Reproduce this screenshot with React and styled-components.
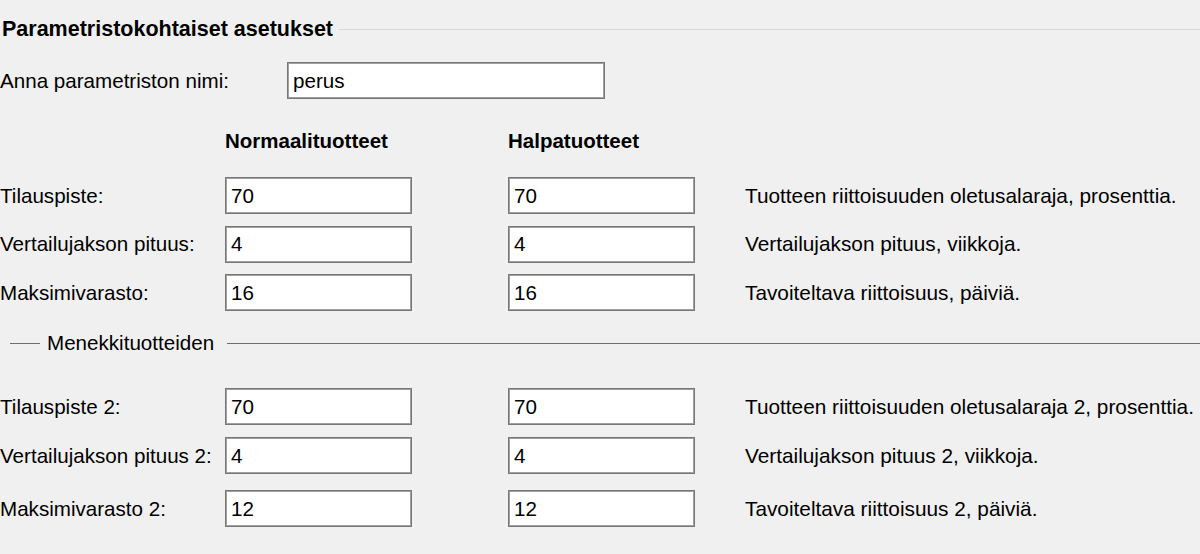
import React from 'react';
import styled, { createGlobalStyle } from 'styled-components';

//#region style

const GlobalStyle = createGlobalStyle`
    body {
        margin: 0;
        background: #f0f0f0;
        font-family: "Liberation Sans", Arial, sans-serif;
        color: #000;
    }
`;

const Page = styled.div`
    width: 1200px;
    height: 554px;
    padding-top: 17px;
    box-sizing: border-box;
    overflow: hidden;
`;

const GroupTitle = styled.div`
    display: flex;
    align-items: center;
    gap: 6px;
    height: 24px;
    padding-left: 2px;
`;

const TitleText = styled.span`
    font-size: 21.5px;
    font-weight: bold;
    white-space: nowrap;
`;

const TitleRule = styled.div`
    flex: 1;
    height: 1px;
    background: #d9d9d9;
`;

const NameRow = styled.div`
    display: flex;
    align-items: center;
    margin-top: 21px;
    height: 37px;
`;

const NameLabel = styled.span`
    font-size: 20.6px;
    width: 287px;
`;

const Row = styled.div`
    display: grid;
    grid-template-columns: 225px 283px 237px 1fr;
    align-items: center;
    height: ${p => p.$h || 37}px;
    margin-top: ${p => p.$top || 0}px;
`;

const Label = styled.span`
    font-size: 20.6px;
    white-space: nowrap;
`;

const Header = styled.span`
    font-size: 20.5px;
    font-weight: bold;
`;

const Help = styled.span`
    font-size: 20.8px;
    white-space: nowrap;
`;

const TextBox = styled.input`
    width: ${p => p.$w || 187}px;
    height: 37px;
    box-sizing: border-box;
    border: 1px solid #777;
    box-shadow: inset 0 0 0 1px #a0a0a0;
    background: #fff;
    padding: 0 0 0 5px;
    margin: 0;
    font-family: "Liberation Sans", Arial, sans-serif;
    font-size: 20.6px;
    color: #000;
    outline: none;
`;

const Divider = styled.div`
    display: flex;
    align-items: center;
    height: 20px;
    margin-top: 22px;
    padding-left: 10px;
`;

const DividerLine = styled.div`
    height: 1px;
    background: #6e6e6e;
    width: ${p => (p.$grow ? 'auto' : '30px')};
    flex: ${p => (p.$grow ? 1 : 'none')};
`;

const DividerText = styled.span`
    font-size: 20.6px;
    padding: 0 13px 0 7px;
    white-space: nowrap;
`;

//#endregion

const upper = [
    { label: 'Tilauspiste:', normal: '70', cheap: '70', help: 'Tuotteen riittoisuuden oletusalaraja, prosenttia.' },
    { label: 'Vertailujakson pituus:', normal: '4', cheap: '4', help: 'Vertailujakson pituus, viikkoja.' },
    { label: 'Maksimivarasto:', normal: '16', cheap: '16', help: 'Tavoiteltava riittoisuus, päiviä.' },
];

const lower = [
    { label: 'Tilauspiste 2:', normal: '70', cheap: '70', help: 'Tuotteen riittoisuuden oletusalaraja 2, prosenttia.' },
    { label: 'Vertailujakson pituus 2:', normal: '4', cheap: '4', help: 'Vertailujakson pituus 2, viikkoja.' },
    { label: 'Maksimivarasto 2:', normal: '12', cheap: '12', help: 'Tavoiteltava riittoisuus 2, päiviä.' },
];

const FieldRow = ({ row, top }) => (
    <Row $top={top}>
        <Label>{row.label}</Label>
        <div><TextBox readOnly value={row.normal} /></div>
        <div><TextBox readOnly value={row.cheap} /></div>
        <Help>{row.help}</Help>
    </Row>
);

export default function App() {
    return (
        <Page>
            <GlobalStyle />
            <GroupTitle>
                <TitleText>Parametristokohtaiset asetukset</TitleText>
                <TitleRule />
            </GroupTitle>

            <NameRow>
                <NameLabel>Anna parametriston nimi:</NameLabel>
                <TextBox readOnly value="perus" $w={318} />
            </NameRow>

            <Row $h={22} $top={30}>
                <span />
                <Header>Normaalituotteet</Header>
                <Header>Halpatuotteet</Header>
                <span />
            </Row>

            {upper.map((row, i) => (
                <FieldRow key={row.label} row={row} top={i === 0 ? 26 : 11.5} />
            ))}

            <Divider>
                <DividerLine />
                <DividerText>Menekkituotteiden</DividerText>
                <DividerLine $grow />
            </Divider>

            <FieldRow row={lower[0]} top={35} />
            <FieldRow row={lower[1]} top={12} />
            <FieldRow row={lower[2]} top={16} />
        </Page>
    );
}
